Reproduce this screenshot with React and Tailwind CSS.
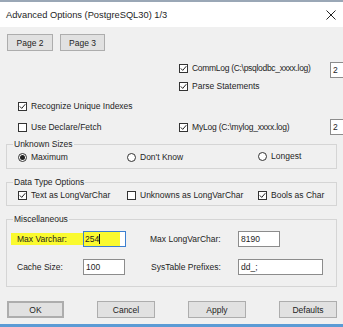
const Check = ({ checked, label, className = "", labelClass = "" }) => (
  <div className={`flex items-center h-[12px] shrink-0 min-w-0 ${className}`}>
    <span className="w-[9px] h-[9px] border border-[#333] bg-white flex items-center justify-center shrink-0">
      {checked && (
        <svg width="7" height="7" viewBox="0 0 7 7">
          <polyline points="0.8,3.4 2.7,5.4 6.3,1.2" fill="none" stroke="#222" strokeWidth="1" />
        </svg>
      )}
    </span>
    <span className={`ml-[4px] whitespace-nowrap ${labelClass}`}>{label}</span>
  </div>
);

const Radio = ({ checked, label, className = "" }) => (
  <div className={`flex items-center h-[12px] shrink-0 ${className}`}>
    <span className="w-[9px] h-[9px] rounded-full border border-[#333] bg-white flex items-center justify-center shrink-0">
      {checked && <span className="w-[5px] h-[5px] rounded-full bg-[#222]" />}
    </span>
    <span className="ml-[4px] whitespace-nowrap">{label}</span>
  </div>
);

const Btn = ({ children, className = "" }) => (
  <div
    className={`h-[17px] flex items-center justify-center bg-[#e1e1e1] border border-[#adadad] shrink-0 ${className}`}
  >
    {children}
  </div>
);

const Field = ({ value, className = "" }) => (
  <div className={`h-[16px] bg-white border border-[#8c8c8c] flex items-center pl-[2px] shrink-0 ${className}`}>
    {value}
  </div>
);

export default function App() {
  return (
    <div className="w-[343px] h-[327px] bg-[#f0f0f0] flex flex-col overflow-hidden font-['Liberation_Sans',Arial,sans-serif] text-[8.5px] leading-[12px] text-[#1e1e1e] border-t-2 border-[#9aa7b6]">
      {/* title bar */}
      <div className="h-[25px] bg-white flex items-center justify-between pl-[6px] pr-[7px] shrink-0">
        <span className="text-[9.3px]">Advanced Options (PostgreSQL30) 1/3</span>
        <svg width="10" height="10" viewBox="0 0 10 10">
          <path d="M0.5 0.5 L9.5 9.5 M9.5 0.5 L0.5 9.5" stroke="#222" strokeWidth="1" />
        </svg>
      </div>

      <div className="flex flex-col pl-[6px]">
        {/* page buttons */}
        <div className="flex gap-[7px] mt-[7px] ml-[1px]">
          <Btn className="w-[46px]">Page 2</Btn>
          <Btn className="w-[45px]">Page 3</Btn>
        </div>

        {/* top options */}
        <div className="flex h-[16px] mt-[11px]">
          <Check
            checked
            label="CommLog (C:\psqlodbc_xxxx.log)"
            className="ml-[173px] w-[151px]"
            labelClass="tracking-[-0.3px]"
          />
          <Field value="2" className="w-[24px]" />
        </div>
        <div className="flex mt-[2px]">
          <Check checked label="Parse Statements" className="ml-[173px]" />
        </div>
        <div className="flex mt-[8px]">
          <Check checked label="Recognize Unique Indexes" className="ml-[12px]" />
        </div>
        <div className="flex items-center h-[16px] mt-[7px]">
          <Check label="Use Declare/Fetch" className="ml-[12px] w-[161px]" />
          <Check checked label="MyLog (C:\mylog_xxxx.log)" className="w-[151px]" labelClass="tracking-[-0.2px]" />
          <Field value="2" className="w-[24px]" />
        </div>

        {/* unknown sizes */}
        <fieldset className="w-[331px] border border-[#d5d5d5] mt-[3px] pb-[5px]">
          <legend className="ml-[6px] px-[1px] leading-[12px]">Unknown Sizes</legend>
          <div className="flex mt-[1px] pl-[11px]">
            <Radio checked label="Maximum" className="w-[109px]" />
            <Radio label="Don't Know" className="w-[131px]" />
            <Radio label="Longest" className="-mt-[1px]" />
          </div>
        </fieldset>

        {/* data type options */}
        <fieldset className="w-[331px] border border-[#d5d5d5] mt-[7px] pb-[4px]">
          <legend className="ml-[6px] px-[1px] leading-[12px]">Data Type Options</legend>
          <div className="flex mt-[1px] pl-[11px]">
            <Check checked label="Text as LongVarChar" className="w-[109px]" />
            <Check label="Unknowns as LongVarChar" className="w-[131px]" />
            <Check checked label="Bools as Char" />
          </div>
        </fieldset>

        {/* miscellaneous */}
        <fieldset className="w-[331px] border border-[#d5d5d5] mt-[7px] pb-[11px]">
          <legend className="ml-[6px] px-[1px] leading-[12px]">Miscellaneous</legend>
          <div className="flex items-center mt-[6px]">
            <div className="ml-[4px] w-[72px] h-[12px] bg-[#fafa2e] pl-[6px] flex items-center shrink-0">Max Varchar:</div>
            <div className="h-[16px] w-[43px] bg-white border border-[#3c7fd0] flex items-stretch shrink-0">
              <div className="w-[36px] bg-[#fafa2e] flex items-center pl-[1px]">
                254
                <span className="w-px h-[10px] bg-[#111]" />
              </div>
            </div>
            <span className="ml-[24px] w-[88px] shrink-0">Max LongVarChar:</span>
            <Field value="8190" className="w-[42px]" />
          </div>
          <div className="flex items-center mt-[12px]">
            <span className="ml-[10px] w-[66px] shrink-0">Cache Size:</span>
            <Field value="100" className="w-[42px]" />
            <span className="ml-[26px] w-[87px] shrink-0">SysTable Prefixes:</span>
            <Field value="dd_;" className="w-[85px]" />
          </div>
        </fieldset>

        {/* bottom buttons */}
        <div className="flex justify-between w-[330px] mt-[14px] ml-[1px]">
          <Btn className="w-[57px] border-2 border-[#3d84d6]">OK</Btn>
          <Btn className="w-[58px]">Cancel</Btn>
          <Btn className="w-[58px]">Apply</Btn>
          <Btn className="w-[58px]">Defaults</Btn>
        </div>
      </div>

      <div className="mt-auto h-[3px] bg-[#5b9bd5] shrink-0" />
    </div>
  );
}
